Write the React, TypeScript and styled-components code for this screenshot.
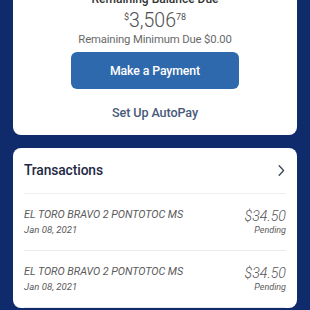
import React from "react";
import styled, { createGlobalStyle } from "styled-components";

const Global = createGlobalStyle`
  html, body { margin: 0; padding: 0; }
  body { background: #0f2b6c; width: 310px; height: 310px; overflow: hidden; font-family: Roboto, "Noto Sans", sans-serif; }
`;

const Page = styled.div`
  display: flex;
  flex-direction: column;
  gap: 13px;
  padding: 0 13px;
  margin-top: -9px;
`;

const SummaryCard = styled.section`
  background: #fff;
  border-radius: 0 0 8px 8px;
  display: flex;
  flex-direction: column;
  align-items: center;
  padding: 0 0 14px;
`;

const Label = styled.div`
  font-size: 12px;
  font-weight: 500;
  color: #333;
  line-height: 16px;
`;

const Amount = styled.div`
  display: flex;
  align-items: flex-start;
  color: #4f4f4f;
  font-weight: 300;
  font-size: 19.5px;
  line-height: 24px;
  margin-top: 1.5px;
`;

const Sup = styled.span`
  font-size: 9px;
  line-height: 12px;
  margin-top: 2px;
  font-weight: 400;
`;

const Minimum = styled.div`
  font-size: 11.3px;
  letter-spacing: -0.15px;
  color: #696969;
  line-height: 14px;
`;

const PayButton = styled.button`
  margin-top: 5.5px;
  width: 168px;
  height: 37px;
  border: none;
  border-radius: 6px;
  background: #2f69ad;
  color: #fff;
  font-family: inherit;
  font-size: 12.3px;
  font-weight: 500;
  letter-spacing: -0.1px;
  padding: 0;
`;

const AutoPay = styled.div`
  margin-top: 15.5px;
  font-size: 12.6px;
  font-weight: 500;
  letter-spacing: -0.1px;
  color: #48597a;
  line-height: 16px;
`;

const TxCard = styled.section`
  background: #fff;
  border-radius: 8px;
  padding: 0 11px;
`;

const TxHeader = styled.div`
  display: flex;
  justify-content: space-between;
  align-items: center;
  height: 45px;
  border-bottom: 1px solid #eceef2;
  color: #1f2a44;
  font-size: 13.8px;
  font-weight: 500;
  letter-spacing: -0.1px;
  padding-right: 1px;
`;

const Row = styled.div`
  display: flex;
  justify-content: space-between;
  align-items: flex-start;
  height: 57px;
  box-sizing: border-box;
  padding-top: 14px;
  border-bottom: 1px solid #e7e9ec;
  font-style: italic;
  color: #5a5a5a;
`;

const Col = styled.div<{ $right?: boolean }>`
  display: flex;
  flex-direction: column;
  align-items: ${(p) => (p.$right ? "flex-end" : "flex-start")};
`;

const Merchant = styled.div`
  font-size: 10.8px;
  letter-spacing: -0.05px;
  line-height: 14px;
`;

const DateText = styled.div`
  font-size: 9.6px;
  line-height: 12px;
  margin-top: 2px;
`;

const Price = styled.div`
  font-size: 14.2px;
  font-weight: 300;
  line-height: 18px;
  margin-top: -1px;
  color: #555;
`;

const Status = styled.div`
  font-size: 9px;
  line-height: 12px;
  margin-top: -1px;
`;

const Chevron = () => (
  <svg width="7" height="11" viewBox="0 0 7 11" fill="none">
    <path d="M1.2 0.8 L5.6 5.5 L1.2 10.2" stroke="#3d4659" strokeWidth="1.3" strokeLinecap="round" strokeLinejoin="round" />
  </svg>
);

const tx = [
  { name: "EL TORO BRAVO 2 PONTOTOC MS", date: "Jan 08, 2021", amount: "$34.50", status: "Pending" },
  { name: "EL TORO BRAVO 2 PONTOTOC MS", date: "Jan 08, 2021", amount: "$34.50", status: "Pending" },
];

export default function App() {
  return (
    <>
      <Global />
      <Page>
        <SummaryCard>
          <Label>Remaining Balance Due</Label>
          <Amount>
            <Sup>$</Sup>3,506<Sup>78</Sup>
          </Amount>
          <Minimum>Remaining Minimum Due $0.00</Minimum>
          <PayButton>Make a Payment</PayButton>
          <AutoPay>Set Up AutoPay</AutoPay>
        </SummaryCard>
        <TxCard>
          <TxHeader>
            <span>Transactions</span>
            <Chevron />
          </TxHeader>
          {tx.map((t, i) => (
            <Row key={i}>
              <Col>
                <Merchant>{t.name}</Merchant>
                <DateText>{t.date}</DateText>
              </Col>
              <Col $right>
                <Price>{t.amount}</Price>
                <Status>{t.status}</Status>
              </Col>
            </Row>
          ))}
        </TxCard>
      </Page>
    </>
  );
}
